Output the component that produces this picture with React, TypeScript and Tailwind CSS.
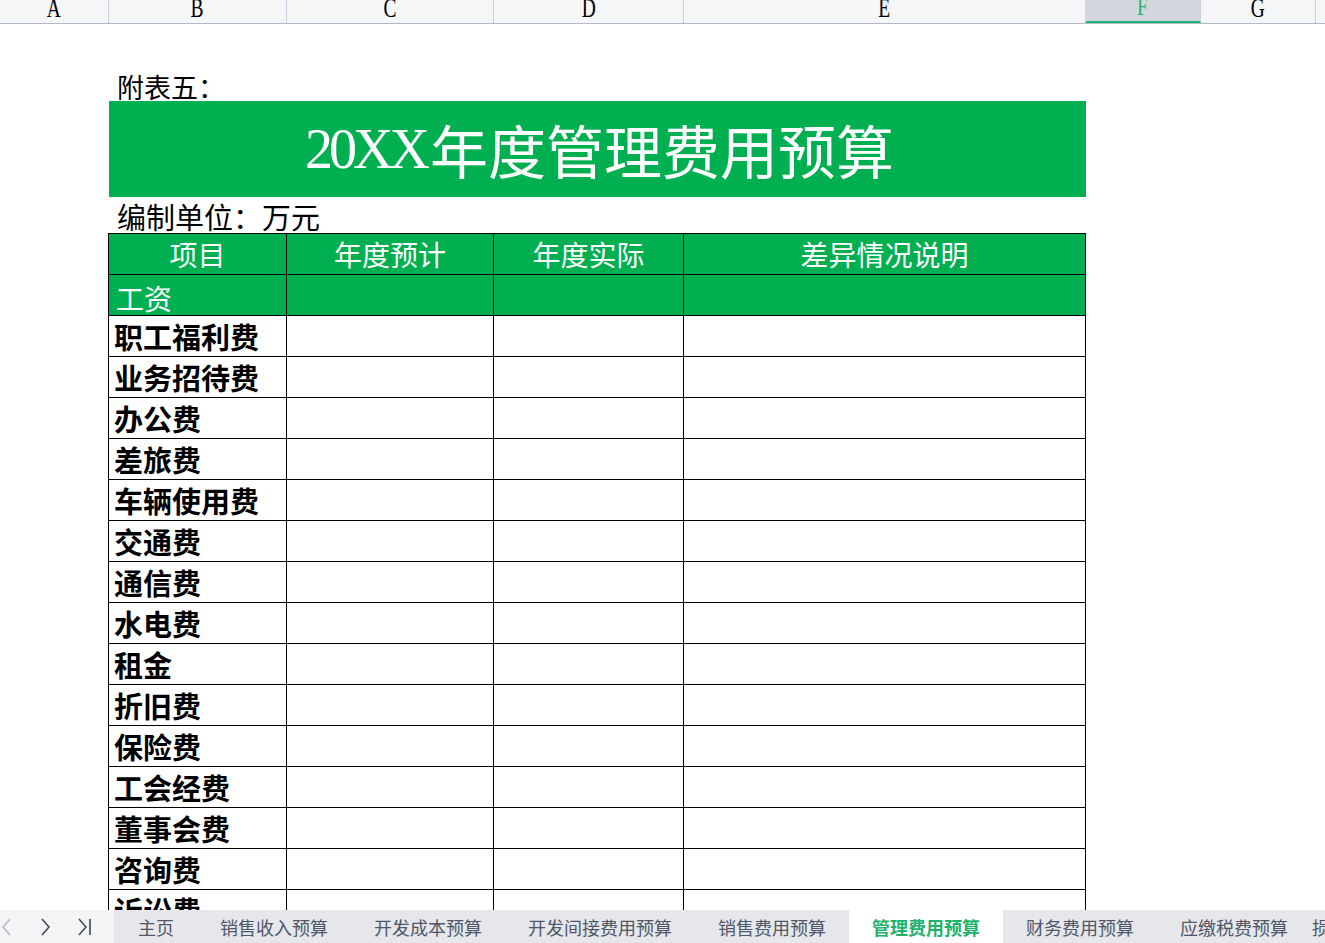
import React from "react";

const cols = [
  { l: "A", w: "w-[109px]" },
  { l: "B", w: "w-[178px]" },
  { l: "C", w: "w-[207px]" },
  { l: "D", w: "w-[190px]" },
  { l: "E", w: "w-[402px]" },
  { l: "F", w: "w-[115px]", active: true },
  { l: "G", w: "w-[115px]" },
];

const items = [
  "职工福利费",
  "业务招待费",
  "办公费",
  "差旅费",
  "车辆使用费",
  "交通费",
  "通信费",
  "水电费",
  "租金",
  "折旧费",
  "保险费",
  "工会经费",
  "董事会费",
  "咨询费",
  "诉讼费",
];

const tabs = [
  "主页",
  "销售收入预算",
  "开发成本预算",
  "开发间接费用预算",
  "销售费用预算",
  "管理费用预算",
  "财务费用预算",
  "应缴税费预算",
];

const serif = "font-['Liberation_Serif','Noto_Sans_CJK_SC',serif]";
const sans = "font-['Noto_Sans_CJK_SC','Noto_Sans',sans-serif]";

export default function App() {
  return (
    <div className="w-[1325px] h-[943px] overflow-hidden bg-white flex flex-col">
      {/* column header */}
      <div className="h-[24px] flex bg-[#f5f6f8] border-b border-[#b3b9cc] shrink-0 overflow-hidden">
        {cols.map((c) => (
          <div
            key={c.l}
            className={`${c.w} shrink-0 h-full flex items-end justify-center border-r border-[#cdd0da] ${serif} text-[27px] leading-none ${
              c.active
                ? "bg-[#d3d6dd] text-[#21b573] border-b-2 border-b-[#21b573]"
                : "text-black"
            }`}
          >
            <span className="scale-x-[0.72] inline-block mb-[1px]">{c.l}</span>
          </div>
        ))}
        <div className="flex-1" />
      </div>

      {/* sheet body */}
      <div className="flex-1 overflow-hidden pl-[109px]">
        <div className="h-[46px]" />
        <div className={`h-[31px] flex items-end pl-[8px] ${sans} text-[27px] leading-none text-black`}>
          <span className="mb-[1px]">附表五：</span>
        </div>
        <div className="w-[977px] h-[96px] bg-[#00b050] flex items-center justify-center text-white leading-none">
          <span className={`${serif} text-[56px] tracking-[-4px] pl-[4px]`}>20XX</span>
          <span className={`${sans} text-[58px] pl-[4px]`}>年度管理费用预算</span>
        </div>
        <div className={`h-[36px] flex items-end pl-[8px] ${sans} text-[29px] leading-none text-black`}>
          <span className="mb-[2px]">编制单位：万元</span>
        </div>

        {/* table */}
        <div className="w-[978px] -ml-[1px] border-l border-t border-black">
          <div className={`flex h-[41px] bg-[#00b050] text-white ${sans} text-[28px] leading-none`}>
            <div className="w-[178px] border-r border-b border-black flex items-center justify-center">项目</div>
            <div className="w-[207px] border-r border-b border-black flex items-center justify-center">年度预计</div>
            <div className="w-[190px] border-r border-b border-black flex items-center justify-center">年度实际</div>
            <div className="w-[402px] border-r border-b border-black flex items-center justify-center">差异情况说明</div>
          </div>
          <div className={`flex h-[41px] bg-[#00b050] text-white ${sans} text-[28px] leading-none`}>
            <div className="w-[178px] border-r border-b border-black flex items-end pl-[7px] pb-[3px]">工资</div>
            <div className="w-[207px] border-r border-b border-black" />
            <div className="w-[190px] border-r border-b border-black" />
            <div className="w-[402px] border-r border-b border-black" />
          </div>
          {items.map((it) => (
            <div key={it} className={`flex h-[41px] text-black ${sans} text-[29px] font-bold leading-none`}>
              <div className="w-[178px] border-r border-b border-black flex items-center pl-[5px] pt-[1px]">{it}</div>
              <div className="w-[207px] border-r border-b border-black" />
              <div className="w-[190px] border-r border-b border-black" />
              <div className="w-[402px] border-r border-b border-black" />
            </div>
          ))}
        </div>
      </div>

      {/* sheet tabs */}
      <div className="h-[33px] shrink-0 flex bg-[#e6e7eb] overflow-hidden">
        <div className="w-[114px] shrink-0 bg-[#f3f4f6] flex items-center">
          <svg width="12" height="20" viewBox="0 0 12 20" className="ml-[1px]">
            <path d="M9 2 L2 10 L9 18" fill="none" stroke="#b4b8c0" strokeWidth="1.5" />
          </svg>
          <svg width="12" height="20" viewBox="0 0 12 20" className="ml-[26px]">
            <path d="M3 2 L10 10 L3 18" fill="none" stroke="#3f4552" strokeWidth="1.5" />
          </svg>
          <svg width="16" height="20" viewBox="0 0 16 20" className="ml-[26px]">
            <path d="M2 2 L9 10 L2 18" fill="none" stroke="#3f4552" strokeWidth="1.5" />
            <path d="M13 2 L13 18" fill="none" stroke="#3f4552" strokeWidth="1.6" />
          </svg>
        </div>
        <div className="w-[1px] shrink-0" />
        {tabs.map((t) => {
          const active = t === "管理费用预算";
          return (
            <div
              key={t}
              className={`shrink-0 h-full flex items-center px-[23px] ${sans} text-[18px] leading-none whitespace-nowrap ${
                active ? "bg-white text-[#1fb26c] font-bold" : "text-[#4f5768]"
              }`}
            >
              {t}
            </div>
          );
        })}
        <div className={`shrink-0 h-full flex items-center pl-[1px] ${sans} text-[18px] leading-none whitespace-nowrap text-[#4f5768]`}>
          损益预算
        </div>
      </div>
    </div>
  );
}
